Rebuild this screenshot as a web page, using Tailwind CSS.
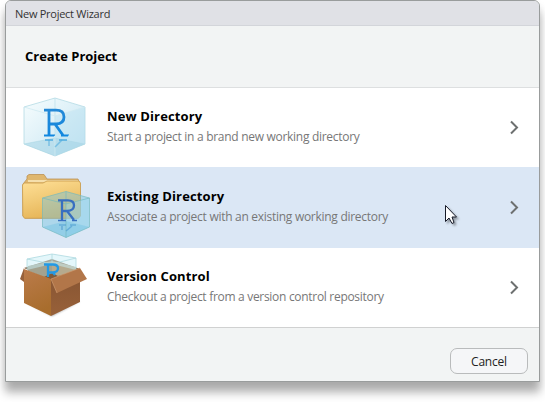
<!DOCTYPE html>
<html lang="en">
<head>
<meta charset="utf-8">
<title>New Project Wizard</title>
<script src="https://cdn.jsdelivr.net/npm/@tailwindcss/browser@4"></script>
</head>
<body class="w-[545px] h-[402px] overflow-hidden bg-white pl-[5px] font-['Open_Sans','Noto_Sans',sans-serif] text-black">
<main class="flex flex-col w-[535px] h-[382px] rounded-t-[6px] border border-[#999c9c] bg-[#f2f4f4] overflow-hidden shadow-[0_11px_10px_0_rgba(0,0,0,0.27),0_5px_8px_0_rgba(0,0,0,0.1)]">
  <header class="h-[25px] shrink-0 bg-[#e0e1e6] border-b border-[#d3d5da] pl-[9px] text-[11px] leading-[26px] tracking-[-0.27px] text-[#333]">New Project Wizard</header>
  <div class="h-[62px] shrink-0 border-b border-[#dddfe0] pl-[19px] pt-[20px] text-[13px] leading-[20px] font-bold tracking-[-0.02px]">Create Project</div>
  <section class="flex flex-col h-[239px] shrink-0 bg-white">
    <div class="flex h-[79px] shrink-0">
      <svg class="w-[90px] h-[79px] shrink-0" viewBox="6 88 90 79">
        <defs>
          <linearGradient id="glass" x1="0" y1="0" x2="1" y2="1"><stop offset="0" stop-color="#f7fdfe"/><stop offset="1" stop-color="#c3e3f1"/></linearGradient>
          <linearGradient id="ink" gradientUnits="userSpaceOnUse" x1="0" y1="108" x2="0" y2="137"><stop offset="0" stop-color="#2589d6"/><stop offset="1" stop-color="#1187e0"/></linearGradient>
        </defs>
        <path d="M55 98 85 107V144L55 156 24 144V107Z" fill="url(#glass)" stroke="#b4dae5" stroke-width=".8"/>
        <path d="M55 98V138L24 144M55 138 85 144" fill="none" stroke="#b9dfe9" stroke-width=".7"/>
        <path d="M55 116 85 107V144L55 156Z" fill="#b5dff0" opacity=".4"/>
        <path d="M24 144 55 138 85 144 55 156Z" fill="#9fd1e4" opacity=".5"/>
        <path d="M24 107 55 116 85 107M55 116V156" fill="none" stroke="#cfeaf1" stroke-width=".8"/>
        <g fill="none" stroke="url(#ink)" stroke-width="2.8"><path d="M44 110.2H56Q64 110.2 64 117T56 124H49M49 110V135M55 124 63 135.3"/><path d="M44 135.5H54.01L54 135.6M61 135.5H68L68 135.6" stroke="#1187e0" stroke-width="2"/></g>
        <g fill="none" stroke="#2e9cdb" stroke-width="1.5" opacity=".75"><path d="M45 140H53M59 140H67"/><path d="M49 140V146M62 140 55 147" opacity=".6"/></g>
      </svg>
      <div class="flex-1 pt-[18px] pl-[11px]">
        <h2 class="text-[13px] leading-[20px] font-bold tracking-[0.13px]">New Directory</h2>
        <p class="mt-px text-[12px] leading-[20px] tracking-[-0.29px] text-[#777]">Start a project in a brand new working directory</p>
      </div>
      <svg class="w-[38px] h-[79px] shrink-0" viewBox="0 0 38 79"><path d="M10 33.5 16 39.5 10 45.5" fill="none" stroke="#6d7070" stroke-width="2"/></svg>
    </div>
    <div class="flex h-[81px] shrink-0 bg-[#dbe7f5]">
      <svg class="w-[90px] h-[81px] shrink-0" viewBox="6 167 90 81">
        <defs><linearGradient id="folder" x1="0" y1="0" x2=".4" y2="1"><stop offset="0" stop-color="#ffe097"/><stop offset=".5" stop-color="#f2cb78"/><stop offset="1" stop-color="#e6b456"/></linearGradient></defs>
        <path d="M23 184 27 179V176L29 174.5H44L47 179H78L80 184V216L78 218H25L23 216Z" fill="#dfb76f" stroke="#bd9254" stroke-width=".8"/>
        <path d="M28 182V180H78V183Z" fill="#f5dfac"/>
        <path d="M22.5 185 24 183H43L47 181H79L80.5 183V216L78.5 218.3H24.5L22.8 216Z" fill="url(#folder)" stroke="#c89a4b" stroke-width=".8"/>
        <path d="M66 191.5 89.5 198V227L66 237.5 42.5 227V198Z" fill="#75c4df" opacity=".45"/>
        <path d="M66 204 89.5 198V227L66 237.5Z" fill="#a0d9ef" opacity=".45"/>
        <path d="M42.5 227 66 221 89.5 227 66 237.5Z" fill="#63bddf" opacity=".35"/>
        <path d="M66 191.5 89.5 198V227L66 237.5 42.5 227V198ZM42.5 198 66 204 89.5 198M66 191.5V237.5" fill="none" stroke="#71b8bd" stroke-width=".8" opacity=".8"/>
        <g fill="none" stroke="#386fc0" stroke-width="2.3"><path d="M58 200.3H68Q74 200.3 74 205.5T67 211H62M62 200V220M67 211 74 220"/><path d="M58 220.5H66M72 220.5H77" stroke-width="1.7"/></g>
        <path d="M59 225H66M70 225H76M62 226V230M72 226 66 231" fill="none" stroke="#4394cc" stroke-width="1.6" opacity=".55"/>
      </svg>
      <div class="flex-1 pt-[19px] pl-[11px]">
        <h2 class="text-[13px] leading-[20px] font-bold tracking-[0.13px]">Existing Directory</h2>
        <p class="mt-px text-[12px] leading-[20px] tracking-[-0.28px] text-[#777]">Associate a project with an existing working directory</p>
      </div>
      <svg class="w-[38px] h-[81px] shrink-0" viewBox="0 0 38 81"><path d="M10 34.5 16 40.5 10 46.5" fill="none" stroke="#6d7070" stroke-width="2"/></svg>
    </div>
    <div class="flex h-[79px] shrink-0">
      <svg class="w-[90px] h-[79px] shrink-0" viewBox="6 248 90 79">
        <defs>
          <linearGradient id="card" x1="0" y1="0" x2=".3" y2="1"><stop offset="0" stop-color="#bb7b4b"/><stop offset="1" stop-color="#a86d2d"/></linearGradient>
          <linearGradient id="side" x1="0" y1="0" x2="0" y2="1"><stop offset="0" stop-color="#855332"/><stop offset="1" stop-color="#986139"/></linearGradient>
          <filter id="soft"><feGaussianBlur stdDeviation="1.2"/></filter>
        </defs>
        <path d="M25 302 51 314 81 301 52 316Z" fill="#555" opacity=".6" filter="url(#soft)"/>
        <path d="M24 268 52 259 80 269 51 280Z" fill="#7e5b3b"/>
        <path d="M28 266 52 261V273L44 277 28 271Z" fill="#a3a28f"/>
        <path d="M52 261 76 267V271L58 276 52 273Z" fill="#b5aa8e"/>
        <path d="M52 254 76 258V270L52 264 27 270V259Z" fill="#caf0f7" opacity=".5"/>
        <path d="M27 269V259L52 254 76 258V270M27 259 52 264 76 258M52 254V265" fill="none" stroke="#add9df" stroke-width=".8"/>
        <path d="M44 264.5H53Q58 264.5 58 268.3T53 272.5H48M48 264V277M53 272.5 55 275" fill="none" stroke="#2399e4" stroke-width="2.3"/>
        <path d="M24 269 51 279V316L24 303Z" fill="url(#card)"/>
        <path d="M51 279 80 269V302L51 316Z" fill="url(#side)"/>
        <path d="M24 268 20 279 24 282Z" fill="#97613b"/>
        <path d="M51 279 80 268 87 279 57 293Z" fill="#b27649"/>
        <path d="M51 279 80 268M51 279 57 293" fill="none" stroke="#ce9b70" stroke-width=".7"/>
      </svg>
      <div class="flex-1 pt-[18px] pl-[11px]">
        <h2 class="text-[13px] leading-[20px] font-bold tracking-[0.13px]">Version Control</h2>
        <p class="mt-px text-[12px] leading-[20px] tracking-[-0.3px] text-[#777]">Checkout a project from a version control repository</p>
      </div>
      <svg class="w-[38px] h-[79px] shrink-0" viewBox="0 0 38 79"><path d="M10 33.5 16 39.5 10 45.5" fill="none" stroke="#6d7070" stroke-width="2"/></svg>
    </div>
  </section>
  <footer class="flex flex-1 justify-end border-t border-[#d0d1d1] pt-[20px] pr-[11px]">
    <button class="w-[78px] h-[26px] rounded-[7px] border border-[#b9bbbc] bg-[#f5f6f8] pt-px text-[12px] leading-[24px] tracking-[-0.2px] text-[#222]">Cancel</button>
  </footer>
</main>
<svg class="absolute left-[444px] top-[204px] w-[18px] h-[25px] drop-shadow-[2px_2px_1px_rgba(0,0,0,0.35)]" viewBox="0 0 18 25"><path d="M1.5 1.5V17.5L5 14 8 19.5 10 18.5 8 13H12.5Z" fill="white" stroke="#161a28"/></svg>
</body>
</html>
